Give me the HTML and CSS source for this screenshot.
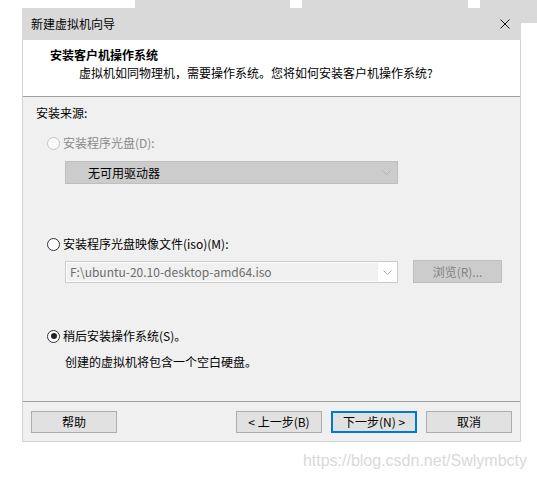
FILE: index.html
```html
<!DOCTYPE html>
<html lang="zh-CN">
<head>
    <meta charset="UTF-8">
    <title>新建虚拟机向导</title>
    <link rel="stylesheet" href="styles.css">
</head>
<body>
    <div class="desktop">
        <div class="bg-win win-a"></div>
        <div class="bg-win win-b"></div>
        <div class="bg-win win-c"></div>
        <div class="bg-win win-d"></div>
    </div>

    <div class="dialog">
        <div class="titlebar">
            <span class="title">新建虚拟机向导</span>
            <svg class="close" width="10" height="10" viewBox="0 0 10 10">
                <path d="M0.5 0.5 L9.5 9.5 M9.5 0.5 L0.5 9.5" stroke="#111" stroke-width="1" fill="none"/>
            </svg>
        </div>

        <div class="header">
            <div class="header-title">安装客户机操作系统</div>
            <div class="header-sub">虚拟机如同物理机，需要操作系统。您将如何安装客户机操作系统?</div>
        </div>

        <div class="content">
            <div class="group-label">安装来源:</div>

            <div class="option first disabled">
                <span class="radio"></span>
                <span>安装程序光盘(D):</span>
            </div>
            <div class="combo combo-disabled">
                <span>无可用驱动器</span>
                <svg class="arrow" width="9" height="5" viewBox="0 0 9 5">
                    <path d="M0.5 0.5 L4.5 4.5 L8.5 0.5" stroke="#b4b4b4" fill="none"/>
                </svg>
            </div>

            <div class="option second">
                <span class="radio"></span>
                <span>安装程序光盘映像文件(iso)(M):</span>
            </div>
            <div class="iso-row">
                <div class="combo combo-iso">
                    <span class="iso-field">F:\ubuntu-20.10-desktop-amd64.iso</span>
                    <svg class="arrow" width="9" height="5" viewBox="0 0 9 5">
                        <path d="M0.5 0.5 L4.5 4.5 L8.5 0.5" stroke="#a8a8a8" fill="none"/>
                    </svg>
                </div>
                <div class="btn btn-disabled">浏览(R)...</div>
            </div>

            <div class="option third">
                <span class="radio checked"></span>
                <span>稍后安装操作系统(S)。</span>
            </div>
            <div class="note">创建的虚拟机将包含一个空白硬盘。</div>
        </div>

        <div class="footer">
            <div class="btn">帮助</div>
            <div class="footer-right">
                <div class="btn">&lt; 上一步(B)</div>
                <div class="btn btn-default">下一步(N) &gt;</div>
                <div class="btn">取消</div>
            </div>
        </div>
    </div>

    <div class="watermark">https://blog.csdn.net/Swlymbcty</div>
</body>
</html>
```

FILE: styles.css
```css
body {
    margin: 0;
    background: #fff;
    font-family: "Noto Sans CJK SC", "Noto Sans", sans-serif;
    font-size: 12px;
    color: #000;
    width: 537px;
    height: 478px;
    overflow: hidden;
    position: relative;
}
.desktop {
    position: absolute;
    top: 0;
    left: 0;
    width: 537px;
    height: 30px;
}
.bg-win {
    position: absolute;
    top: 0;
    height: 8px;
    background: #d9d9d9;
}
.win-a { left: 135px; width: 155px; }
.win-b { left: 302px; width: 166px; }
.win-c { left: 480px; width: 57px; height: 23px; }
.win-d { left: 440px; width: 28px; }

.dialog {
    position: relative;
    margin: 8px 0 0 22px;
    width: 499px;
    box-sizing: border-box;
    border: 1px solid #d2d2d2;
    border-top: none;
    background: #f0f0f0;
}
.titlebar {
    height: 32px;
    margin: 0 -1px;
    background: #d9d9d9;
    display: flex;
    align-items: center;
    justify-content: space-between;
    padding: 0 11px 0 9px;
}
.title {
    line-height: 16px;
}
.header {
    height: 56px;
    background: #fff;
    border-bottom: 1px solid #a0a0a0;
    box-sizing: content-box;
}
.header-title {
    font-weight: bold;
    line-height: 16px;
    padding: 7px 0 0 27px;
}
.header-sub {
    line-height: 16px;
    margin-top: 2px;
    padding-left: 56px;
}
.content {
    height: 296px;
    border-bottom: 1px solid #a0a0a0;
    padding: 8px 0 0 13px;
    box-sizing: content-box;
}
.group-label {
    line-height: 16px;
}
.option {
    display: flex;
    align-items: center;
    line-height: 16px;
    height: 16px;
    margin-left: 11px;
    gap: 3px;
}
.option.first { margin-top: 14px; }
.option.second { margin-top: 52px; }
.option.third { margin-top: 45px; }
.option.disabled { color: #8a8a8a; }
.radio {
    width: 11px;
    height: 11px;
    border: 1px solid #333;
    border-radius: 50%;
    background: #fff;
    position: relative;
}
.option.disabled .radio {
    border-color: #c4c4c4;
    background: #fbfbfb;
}
.radio.checked::after {
    content: "";
    position: absolute;
    left: 2.5px;
    top: 2.5px;
    width: 6px;
    height: 6px;
    border-radius: 50%;
    background: #222;
}
.combo {
    width: 333px;
    height: 23px;
    box-sizing: border-box;
    display: flex;
    align-items: center;
    justify-content: space-between;
    margin-left: 29px;
}
.combo-disabled {
    margin-top: 10px;
    background: #cccccc;
    border: 1px solid #bfbfbf;
    padding: 0 6px 0 22px;
}
.iso-row {
    display: flex;
    align-items: flex-start;
    margin-top: 8px;
    gap: 15px;
}
.combo-iso {
    height: 22px;
    margin-top: 1px;
    background: #fff;
    border: 1px solid #cbcbcb;
    padding: 1px 5px 1px 1px;
}
.iso-field {
    flex: 1;
    height: 18px;
    line-height: 18px;
    background: #f0f0f0;
    color: #6d6d6d;
    padding-left: 3px;
    margin-right: 5px;
}
.note {
    margin: 10px 0 0 29px;
    line-height: 16px;
}
.footer {
    height: 39px;
    display: flex;
    justify-content: space-between;
    align-items: flex-start;
    padding: 9px 8px 0 8px;
    box-sizing: border-box;
}
.footer-right {
    display: flex;
    gap: 9px;
}
.btn {
    width: 86px;
    height: 22px;
    box-sizing: border-box;
    border: 1px solid #adadad;
    background: #e1e1e1;
    display: flex;
    align-items: center;
    justify-content: center;
    line-height: 16px;
}
.btn-default {
    border: 2px solid #0078d7;
}
.btn-disabled {
    width: 89px;
    height: 23px;
    background: #cccccc;
    border-color: #bfbfbf;
    color: #838383;
}
.watermark {
    font-family: "Liberation Sans", Arial, sans-serif;
    font-size: 16px;
    line-height: 18px;
    color: #d9d9d9;
    text-align: right;
    padding-right: 10px;
    margin-top: 10px;
}
```
